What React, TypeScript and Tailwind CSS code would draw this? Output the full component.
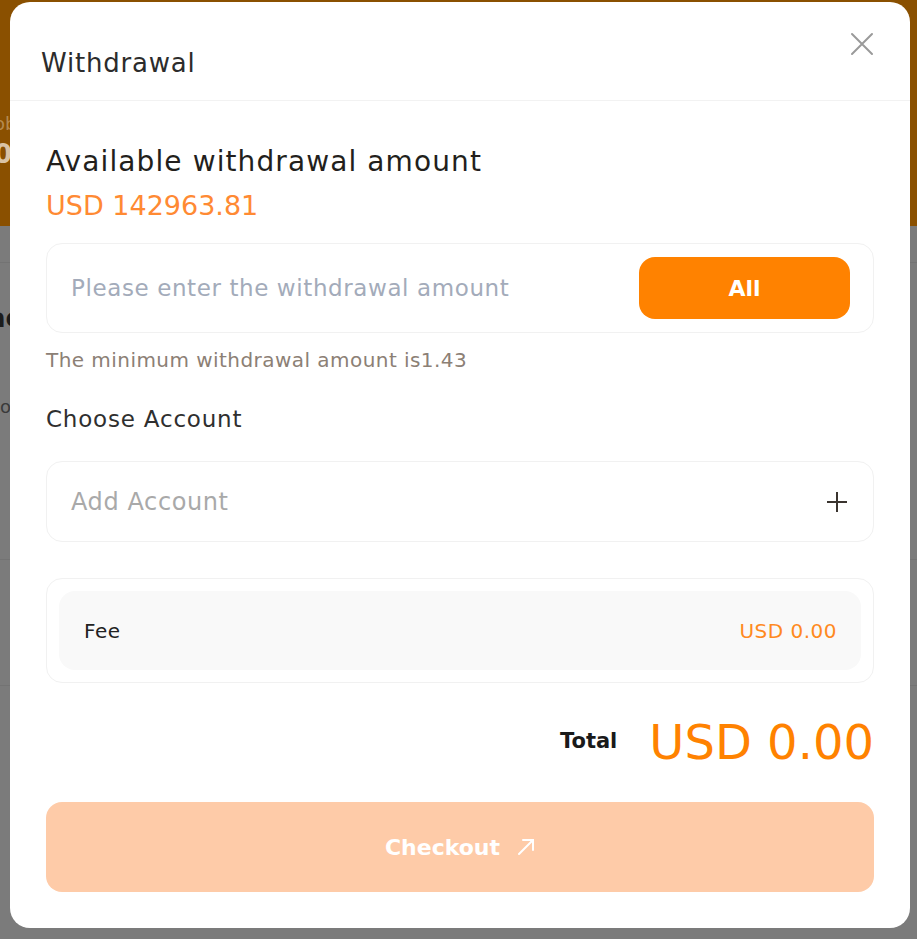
import React, { useState } from 'react';

const font = { fontFamily: '"DejaVu Sans", "Open Sans", sans-serif' };

const CloseIcon = () => (
  <svg width="24" height="24" viewBox="0 0 24 24" fill="none" stroke="#9a9a9a" strokeWidth="2" strokeLinecap="round">
    <path d="M2 2L22 22M22 2L2 22" />
  </svg>
);

const PlusIcon = () => (
  <svg width="20" height="20" viewBox="0 0 20 20" fill="none" stroke="#3a342f" strokeWidth="2">
    <path d="M10 0V20M0 10H20" />
  </svg>
);

const ArrowIcon = () => (
  <svg width="18" height="18" viewBox="0 0 18 18" fill="none" stroke="#ffffff" strokeWidth="2" strokeLinecap="round">
    <path d="M2 16L16 2M6 2H16V12" />
  </svg>
);

const App = () => {
  const [amount, setAmount] = useState('');

  return (
    <div className="relative w-[917px] h-[939px] overflow-hidden bg-[#7b7b7b]" style={font}>
      {/* Page behind the overlay (only a sliver shows) */}
      <div className="h-[226px] bg-[#8a5000] flex flex-col pt-[112px] -ml-[6px]">
        <span className="text-[18px] leading-[24px] text-[#b58a4f]">ob</span>
        <span className="text-[26px] leading-[32px] text-[#d9c3a6] font-bold mt-[2px]">00</span>
      </div>
      <div className="h-px bg-[#737373] mt-[36px]" />
      <div className="flex flex-col -ml-[12px]">
        <span className="mt-[40px] text-[26px] leading-[30px] font-bold text-[#1c1c1c]">ac</span>
        <span className="mt-[62px] text-[18px] leading-[24px] text-[#3a3a3a]">tio</span>
      </div>
      <div className="h-px bg-[#737373] mt-[140px]" />
      <div className="h-px bg-[#737373] mt-[125px]" />

      {/* Modal */}
      <div className="absolute left-[10px] top-[2px] w-[900px] h-[926px] bg-white rounded-[20px] flex flex-col">
        <div className="h-[99px] border-b border-[#f2f2f2] flex items-center justify-between pl-[31px] pr-[36px] relative">
          <h2 className="text-[26px] leading-[30px] tracking-[0.8px] text-[#2c2c2c] mt-[23px]">Withdrawal</h2>
          <button className="absolute right-[36px] top-[30px]">
            <CloseIcon />
          </button>
        </div>

        <div className="px-9 flex flex-col">
          <div className="mt-[41px] text-[28px] leading-[40px] tracking-[1.1px] text-[#231f1c]">Available withdrawal amount</div>
          <div className="mt-[4px] text-[27px] leading-[40px] text-[#ff8a33]">USD 142963.81</div>

          <div className="mt-[17px] h-[90px] border border-[#f1f1f1] rounded-[16px] flex items-center pl-[24px] pr-[23px]">
            <input
              value={amount}
              onChange={(e) => setAmount(e.target.value)}
              placeholder="Please enter the withdrawal amount"
              className="flex-1 outline-none text-[23px] tracking-[0.6px] text-[#333] placeholder:text-[#a3abba]"
            />
            <button className="w-[211px] h-[62px] rounded-[16px] bg-[#ff8200] text-white text-[22px] font-semibold">
              All
            </button>
          </div>

          <div className="mt-[15px] text-[20px] leading-[24px] tracking-[0.45px] text-[#8c8075]">The minimum withdrawal amount is1.43</div>

          <div className="mt-[33px] text-[23px] leading-[28px] tracking-[0.8px] text-[#2f2f2f]">Choose Account</div>

          <div className="mt-[28px] h-[81px] border border-[#f1f1f1] rounded-[16px] flex items-center justify-between pl-[24px] pr-[26px]">
            <span className="text-[24px] tracking-[0.6px] text-[#a9a9a9]">Add Account</span>
            <PlusIcon />
          </div>

          <div className="mt-[36px] h-[105px] border border-[#f1f1f1] rounded-[16px] p-[12px]">
            <div className="h-full rounded-[16px] bg-[#f9f9f9] flex items-center justify-between pl-[25px] pr-[24px]">
              <span className="text-[20px] tracking-[0.5px] text-[#222]">Fee</span>
              <span className="text-[20px] tracking-[0.5px] text-[#ff8a1f]">USD 0.00</span>
            </div>
          </div>

          <div className="mt-[30px] flex items-center justify-end gap-[32px] h-[58px]">
            <span className="text-[21px] font-semibold text-[#1a1a1a]">Total</span>
            <span className="text-[48px] leading-[58px] text-[#ff8200]">USD 0.00</span>
          </div>

          <button className="mt-[31px] h-[90px] rounded-[16px] bg-[#fecba8] flex items-center justify-center gap-[17px]">
            <span className="text-[22px] font-semibold text-white">Checkout</span>
            <ArrowIcon />
          </button>
        </div>
      </div>
    </div>
  );
};

export default App;
